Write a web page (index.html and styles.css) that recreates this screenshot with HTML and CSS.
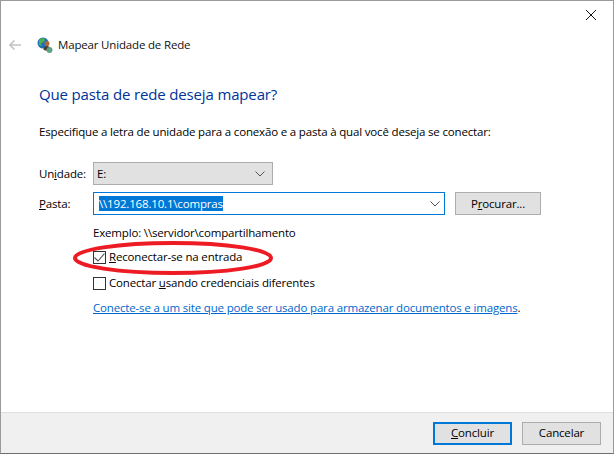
FILE: index.html
```html
<!DOCTYPE html>
<html lang="pt-BR">
<head>
<meta charset="utf-8">
<title>Mapear Unidade de Rede</title>
<link rel="stylesheet" href="styles.css">
</head>
<body>
<div class="window">
  <div class="titlebar">
    <svg class="close" width="10" height="10" viewBox="0 0 10 10"><path d="M0 0L10 10M10 0L0 10" stroke="#111" stroke-width="1" fill="none"/></svg>
  </div>
  <div class="nav">
    <svg class="back" width="12" height="10" viewBox="0 0 12 10"><path d="M12 5H1M5.5 .5L1 5l4.500 4.500" stroke="#c4c4c4" stroke-width="1.600" fill="none"/></svg>
    <svg class="appicon" width="16" height="16" viewBox="0 0 16 16">
      <circle cx="6" cy="6" r="5.500" fill="#1c6fb8"/>
      <path d="M2 3q3-3 6-1l-1 3-3 1 1 3-3-1zM8 8l2-2 1 2-2 2z" fill="#4fb04a"/>
      <circle cx="10" cy="6.500" r="2.500" fill="#a8683a"/>
      <path d="M6.500 13c0-3 1.500-4 3.500-4s3 1 3 3l-2 2z" fill="#4a3a2c"/>
      <circle cx="12.500" cy="13" r="3" fill="#5fa386"/>
    </svg>
    <span class="navtitle">Mapear Unidade de Rede</span>
  </div>
  <main class="content">
    <h1 class="heading">Que pasta de rede deseja mapear?</h1>
    <p class="intro">Especifique a letra de unidade para a conexão e a pasta à qual você deseja se conectar:</p>
    <div class="formrow first">
      <span class="label">Un<u>i</u>dade:</span>
      <div class="select"><span class="value">E:</span>
        <svg class="chev" width="10" height="6" viewBox="0 0 10 6"><path d="M.5 .5L5 5l4.500-4.500" stroke="#555" fill="none"/></svg>
      </div>
    </div>
    <div class="formrow second">
      <span class="label"><u>P</u>asta:</span>
      <div class="combo"><span class="selected">\\192.168.10.1\compras</span>
        <svg class="chev" width="10" height="6" viewBox="0 0 10 6"><path d="M.5 .5L5 5l4.500-4.500" stroke="#555" fill="none"/></svg>
      </div>
      <div class="btn browse">P<u>r</u>ocurar...</div>
    </div>
    <div class="options">
      <div class="example">Exemplo: \\servidor\compartilhamento</div>
      <div class="check first-check">
        <span class="box"><svg width="11" height="9" viewBox="0 0 11 9"><path d="M.5 4.500L4 8l6.500-7.500" stroke="#555" stroke-width="1.100" fill="none"/></svg></span>
        <span><u>R</u>econectar-se na entrada</span>
      </div>
      <div class="check second-check">
        <span class="box"></span>
        <span>Conectar <u>u</u>sando credenciais diferentes</span>
      </div>
      <a class="link" href="#">Conecte-se a um site que pode ser usado para armazenar documentos e imagens</a><span class="dot">.</span>
    </div>
  </main>
  <footer class="footer">
    <div class="btn primary"><span><u>C</u>oncluir</span></div>
    <div class="btn">Cancelar</div>
  </footer>
  <svg class="oval" width="200" height="34" viewBox="0 0 200 34"><ellipse cx="100" cy="17" rx="98" ry="15" fill="none" stroke="#ed1c24" stroke-width="4"/></svg>
</div>
</body>
</html>
```
FILE: styles.css
```css
* { box-sizing: border-box; }
html, body { margin: 0; padding: 0; }
body { width: 614px; height: 454px; overflow: hidden; background: #fff; }
.window {
  position: relative;
  width: 614px; height: 454px;
  border: 1px solid #9a9a9a;
  border-bottom-color: #6e6e6e;
  display: flex; flex-direction: column;
  background: #fff;
  font: 11.5px/16px "Open Sans", "Noto Sans", sans-serif;
  letter-spacing: -0.17px;
  color: #000;
}
.titlebar { height: 29px; display: flex; justify-content: flex-end; align-items: flex-start; padding: 9px 17px 0 0; }
.close { display: block; }
.nav { height: 30px; display: flex; align-items: center; padding-left: 8px; }
.back { margin-right: 16px; }
.appicon { margin-right: 5px; }
.navtitle { color: #111; }
.content { flex: 1; padding: 0 0 0 38px; }
.heading { margin: 22px 0 0; font-size: 15px; line-height: 24px; font-weight: 400; color: #003399; letter-spacing: -0.15px; }
.intro { margin: 18px 0 0; }
.formrow { display: flex; align-items: center; }
.formrow.first { margin-top: 22px; }
.formrow.second { margin-top: 7px; }
.label { width: 54px; }
.select {
  width: 180px; height: 23px;
  background: #e1e1e1; border: 1px solid #adadad;
  display: flex; align-items: center; justify-content: space-between;
  padding: 0 7px 0 3px;
}
.combo {
  width: 352px; height: 23px;
  border: 1px solid #0078d7; background: #fff;
  display: flex; align-items: center; justify-content: space-between;
  padding: 0 3px 0 5px;
}
.selected { background: #0078d7; color: #fff; line-height: 15px; }
.chev { display: block; }
.combo .chev { margin-right: 1px; }
.btn {
  width: 79px; height: 23px;
  display: flex; align-items: center; justify-content: center;
  background: #e1e1e1; border: 1px solid #adadad;
}
.browse { width: 86px; margin-left: 10px; }
.options { margin: 10px 0 0 54px; }
.check { display: flex; align-items: center; gap: 3px; height: 16px; }
.first-check { margin-top: 8px; }
.second-check { margin-top: 10px; }
.box {
  width: 13px; height: 13px; border: 1px solid #333; background: #fff;
  display: flex; align-items: center; justify-content: center;
}
.box svg { display: block; }
.link { display: inline-block; margin-top: 9px; color: #0066cc; text-decoration: underline; }
.footer {
  height: 41px;
  background: #f0f0f0; border-top: 1px solid #dfdfdf;
  display: flex; justify-content: flex-end; align-items: center; gap: 10px;
  padding: 0 12px 0 0;
}
.primary { border: 2px solid #0078d7; }
.oval { position: absolute; left: 72px; top: 240px; }
```
